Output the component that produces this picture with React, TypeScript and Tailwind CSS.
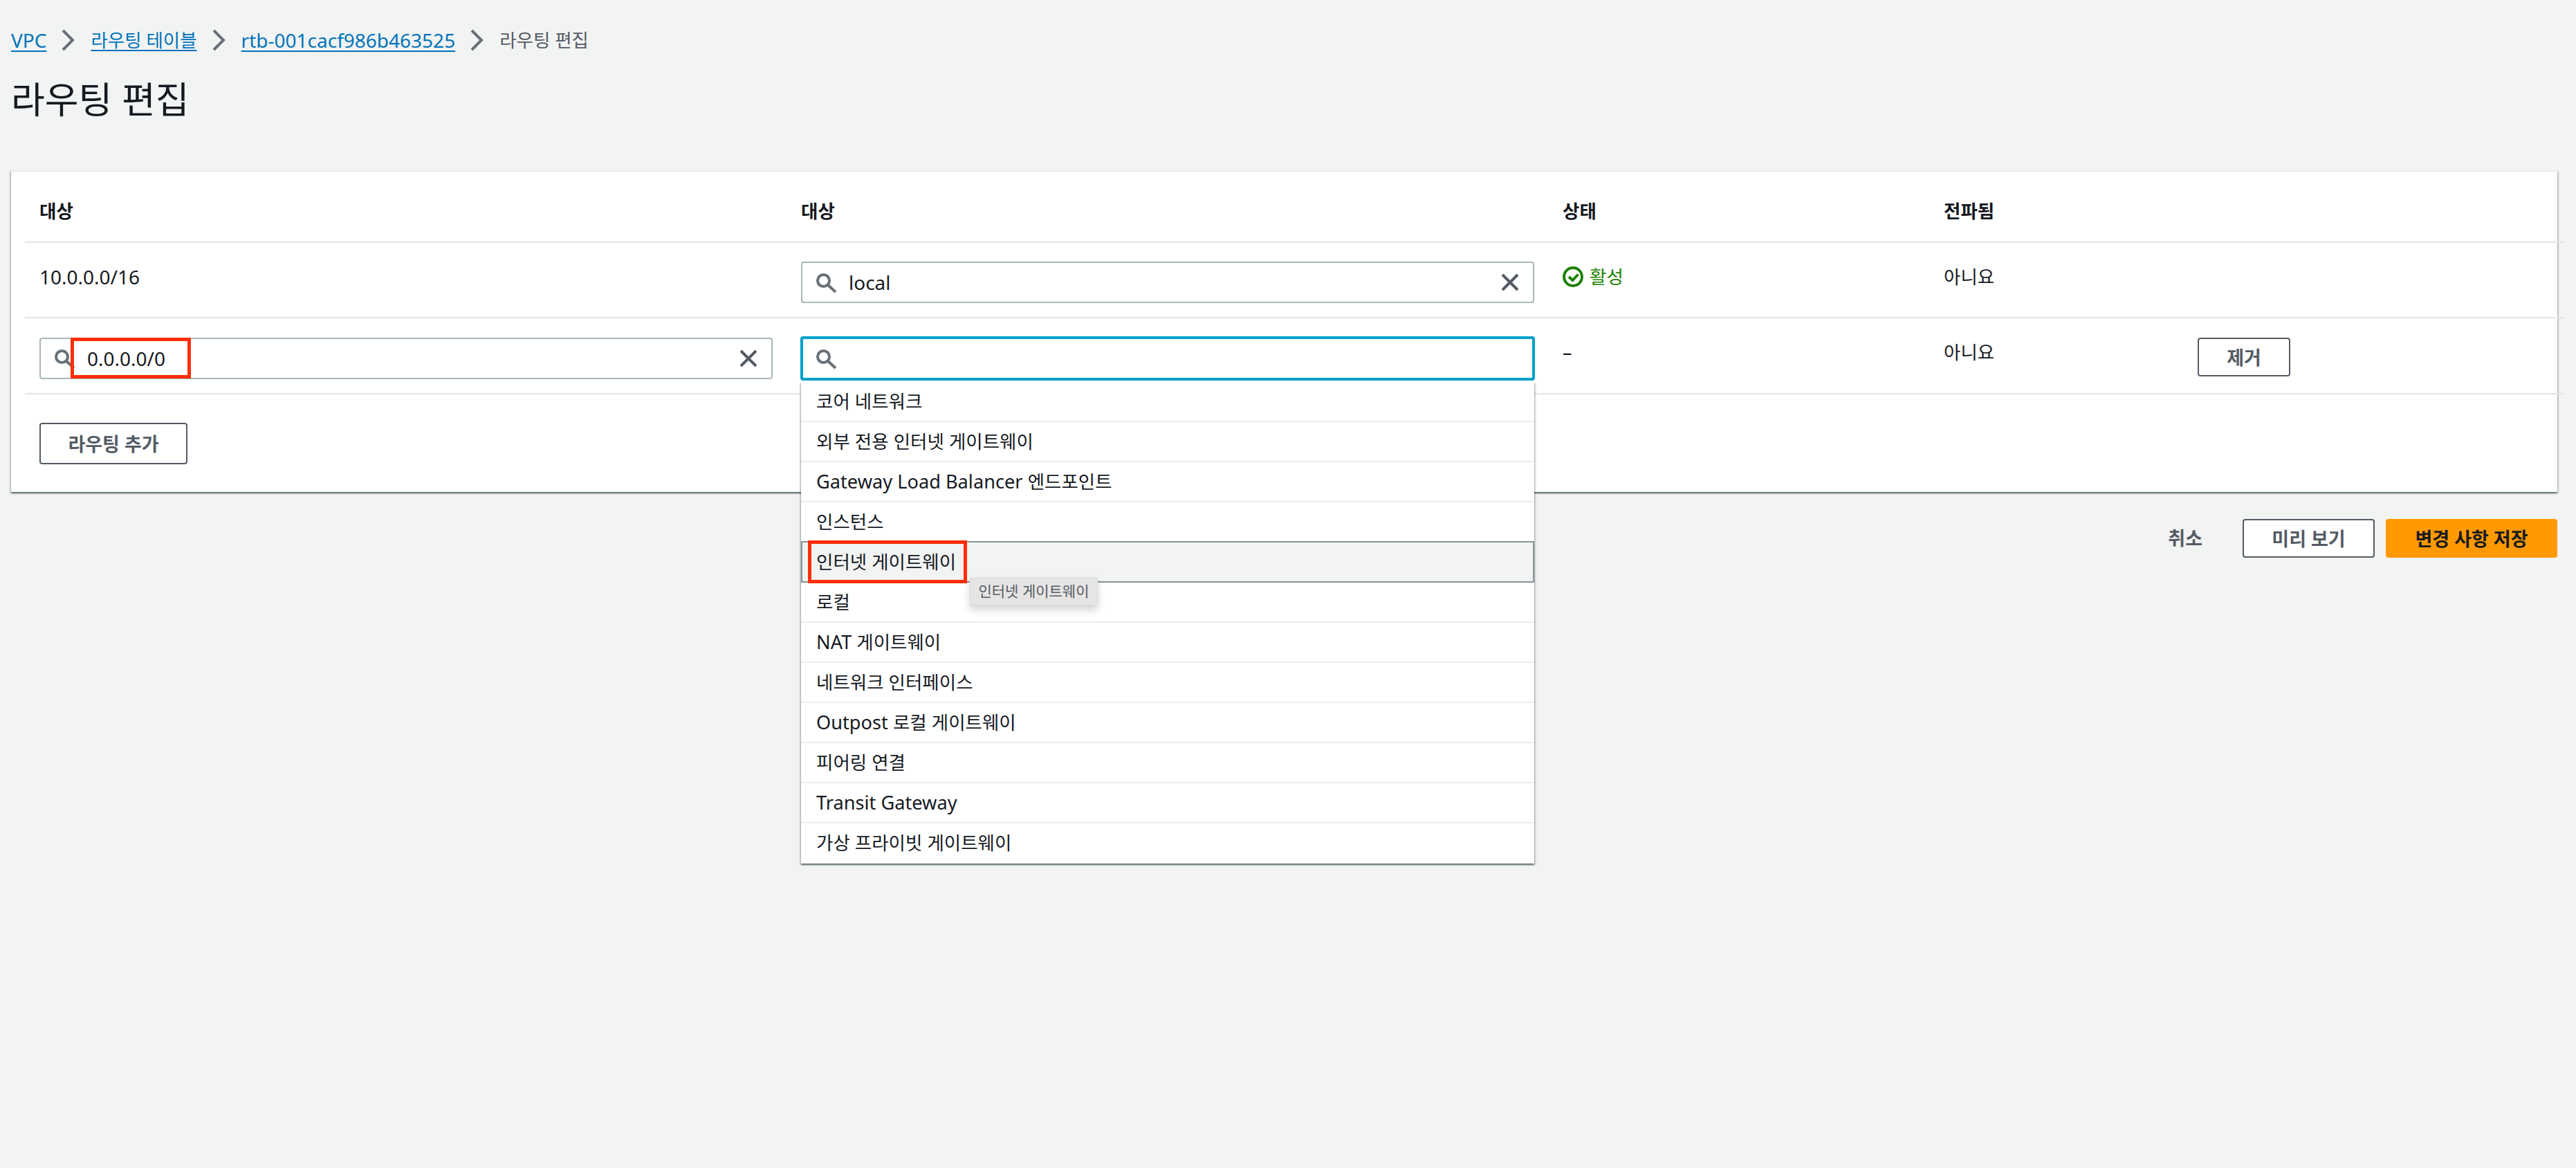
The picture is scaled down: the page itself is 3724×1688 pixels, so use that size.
import { ReactNode } from 'react';

const OPTIONS = [
  '코어 네트워크',
  '외부 전용 인터넷 게이트웨이',
  'Gateway Load Balancer 엔드포인트',
  '인스턴스',
  '인터넷 게이트웨이',
  '로컬',
  'NAT 게이트웨이',
  '네트워크 인터페이스',
  'Outpost 로컬 게이트웨이',
  '피어링 연결',
  'Transit Gateway',
  '가상 프라이빗 게이트웨이',
];

// latin runs are set a bit larger than hangul, as in the original font pairing
function Mixed({ text, latinClass = 'text-[28px]' }: { text: string; latinClass?: string }) {
  const parts = text.split(/([\x00-\x7f]+)/).filter(Boolean);
  return (
    <>
      {parts.map((part, i) =>
        /^[\x00-\x7f]+$/.test(part) ? (
          <span key={i} className={latinClass}>{part}</span>
        ) : (
          <span key={i}>{part}</span>
        ),
      )}
    </>
  );
}

function SearchIcon() {
  return (
    <svg className="w-8 h-8 shrink-0 text-[#687078]" viewBox="0 0 32 32" fill="none" stroke="currentColor" strokeWidth="4">
      <circle cx="12.5" cy="13.5" r="8.5" />
      <path d="M18.5 19.5L30 30" />
    </svg>
  );
}

function ClearIcon() {
  return (
    <svg className="w-8 h-8 shrink-0 text-[#545b64]" viewBox="0 0 32 32" fill="none" stroke="currentColor" strokeWidth="4">
      <path d="M5 5l22 22M27 5L5 27" />
    </svg>
  );
}

function ChevronIcon() {
  return (
    <svg className="w-5 h-8 shrink-0 text-[#687078]" viewBox="0 0 20 32" fill="none" stroke="currentColor" strokeWidth="4">
      <path d="M2 2l14 14L2 30" />
    </svg>
  );
}

function OutlineButton({ children, className }: { children: ReactNode; className: string }) {
  return (
    <button className={`border-2 border-[#545b64] rounded-[4px] bg-white text-[#545b64] font-bold text-[27px] leading-none flex items-center justify-center ${className}`}>
      {children}
    </button>
  );
}

function SearchInput({ value, focused, clear = true }: { value?: string; focused?: boolean; clear?: boolean }) {
  return (
    <div
      className={
        focused
          ? 'h-[64px] -mt-[2px] -mx-px border-4 border-[#00a1c9] rounded-[4px] bg-white flex items-center pl-[17px] pr-[17px]'
          : 'h-[60px] border-2 border-[#aab7b8] rounded-[4px] bg-white flex items-center pl-[18px] pr-[17px]'
      }
    >
      <SearchIcon />
      <span className="ml-[17px] flex-1 text-[28px] text-[#16191f]">{value}</span>
      {clear && <ClearIcon />}
    </div>
  );
}

const ROW = 'grid grid-cols-[1101px_1101px_551px_367px_1fr] pl-[21px] border-b-2 border-[#e3e5e7]';

export default function App() {
  return (
    <div className="min-h-[1688px] bg-[#f2f3f3] pl-4 pr-[27px] overflow-hidden font-['Noto_Sans','Noto_Sans_CJK_KR',sans-serif] text-[26.5px] text-[#16191f]">
      {/* breadcrumbs */}
      <nav className="h-[118px] pt-[38px] flex items-start leading-[40px]">
        <a className="text-[#0073bb] underline decoration-2 underline-offset-[4px]"><Mixed text="VPC" /></a>
        <span className="mx-[22px] mt-[4px]"><ChevronIcon /></span>
        <a className="text-[#0073bb] underline decoration-2 underline-offset-[4px]">라우팅 테이블</a>
        <span className="mx-[22px] mt-[4px]"><ChevronIcon /></span>
        <a className="text-[#0073bb] underline decoration-2 underline-offset-[4px]"><Mixed text="rtb-001cacf986b463525" /></a>
        <span className="mx-[22px] mt-[4px]"><ChevronIcon /></span>
        <span className="text-[#545b64]">라우팅 편집</span>
      </nav>

      <h1 className="h-[128px] text-[53px] leading-[52px] font-normal">라우팅 편집</h1>

      {/* route table card */}
      <div className="relative h-[465px] bg-white border-t-2 border-[#eaeded] shadow-[0_2px_2px_0_rgba(0,28,36,0.5),2px_2px_2px_0_rgba(0,28,36,0.15),-2px_2px_2px_0_rgba(0,28,36,0.15)]">
        <div className="ml-[20px] mr-[-11px]">
          <div className={`${ROW} h-[103px] pt-[37px] font-bold leading-[40px]`}>
            <div>대상</div>
            <div>대상</div>
            <div>상태</div>
            <div>전파됨</div>
            <div />
          </div>

          <div className={`${ROW} h-[109px] leading-[40px]`}>
            <div className="pt-[29px]"><Mixed text="10.0.0.0/16" /></div>
            <div className="pt-[27px] pr-[41px]"><SearchInput value="local" /></div>
            <div className="pt-[29px] flex items-start gap-[8px] text-[#1d8102]">
              <svg className="w-8 h-8 mt-[4px] -ml-px" viewBox="0 0 32 32" fill="none" stroke="currentColor" strokeWidth="4">
                <circle cx="16" cy="16" r="13" />
                <path d="M10 16l5.5 5 8-8.5" />
              </svg>
              활성
            </div>
            <div className="pt-[29px]">아니요</div>
            <div />
          </div>

          <div className={`${ROW} h-[110px] leading-[40px]`}>
            <div className="pt-[28px] pr-[41px] relative">
              <SearchInput value="0.0.0.0/0" />
              <div className="absolute left-[45px] top-[28px] w-[174px] h-[59px] border-[5px] border-[#ff2e0a]" />
            </div>
            <div className="pt-[28px] pr-[41px] relative">
              <SearchInput focused clear={false} />
              <div className="absolute z-10 left-0 top-[92px] w-[1060px] bg-white shadow-[0_2px_2px_0_rgba(0,28,36,0.5),2px_2px_2px_0_rgba(0,28,36,0.15),-2px_2px_2px_0_rgba(0,28,36,0.15)]">
                {OPTIONS.map((option, i) => (
                  <div
                    key={option}
                    className={
                      i === 4
                        ? 'relative h-[60px] -mt-[2px] border-2 border-[#879596] bg-[#f2f3f3] pl-[20px] leading-[56px]'
                        : 'h-[58px] border-b-2 last:border-b-0 border-[#eaeded] pl-[22px] leading-[56px]'
                    }
                  >
                    <Mixed text={option} latinClass="text-[27.2px]" />
                    {i === 4 && (
                      <>
                        <div className="absolute left-[8px] -top-[3px] w-[230px] h-[62px] border-[5px] border-[#ff2e0a]" />
                        <div className="absolute z-20 left-[242px] top-[51px] w-[185px] h-[40px] rounded-[2px] bg-[#e6e5e3] border border-[#dddcda] text-[#545b64] text-[21px] leading-[36px] text-center shadow-[0_6px_12px_rgba(0,0,0,0.18)]">
                          인터넷 게이트웨이
                        </div>
                      </>
                    )}
                  </div>
                ))}
              </div>
            </div>
            <div className="pt-[29px]">–</div>
            <div className="pt-[29px]">아니요</div>
            <div className="pt-[28px]">
              <OutlineButton className="w-[134px] h-[56px]">제거</OutlineButton>
            </div>
          </div>

          <div className="pl-[21px] pt-[41px]">
            <OutlineButton className="w-[214px] h-[60px]">라우팅 추가</OutlineButton>
          </div>
        </div>
      </div>

      {/* footer actions */}
      <div className="flex justify-end items-center mt-[39px]">
        <span className="mr-[58px] text-[#545b64] font-bold text-[27px]">취소</span>
        <OutlineButton className="w-[191px] h-[56px] mr-[16px]">미리 보기</OutlineButton>
        <button className="w-[248px] h-[56px] rounded-[4px] bg-[#ff9900] text-[#16191f] font-bold text-[27px] leading-none">변경 사항 저장</button>
      </div>
    </div>
  );
}
